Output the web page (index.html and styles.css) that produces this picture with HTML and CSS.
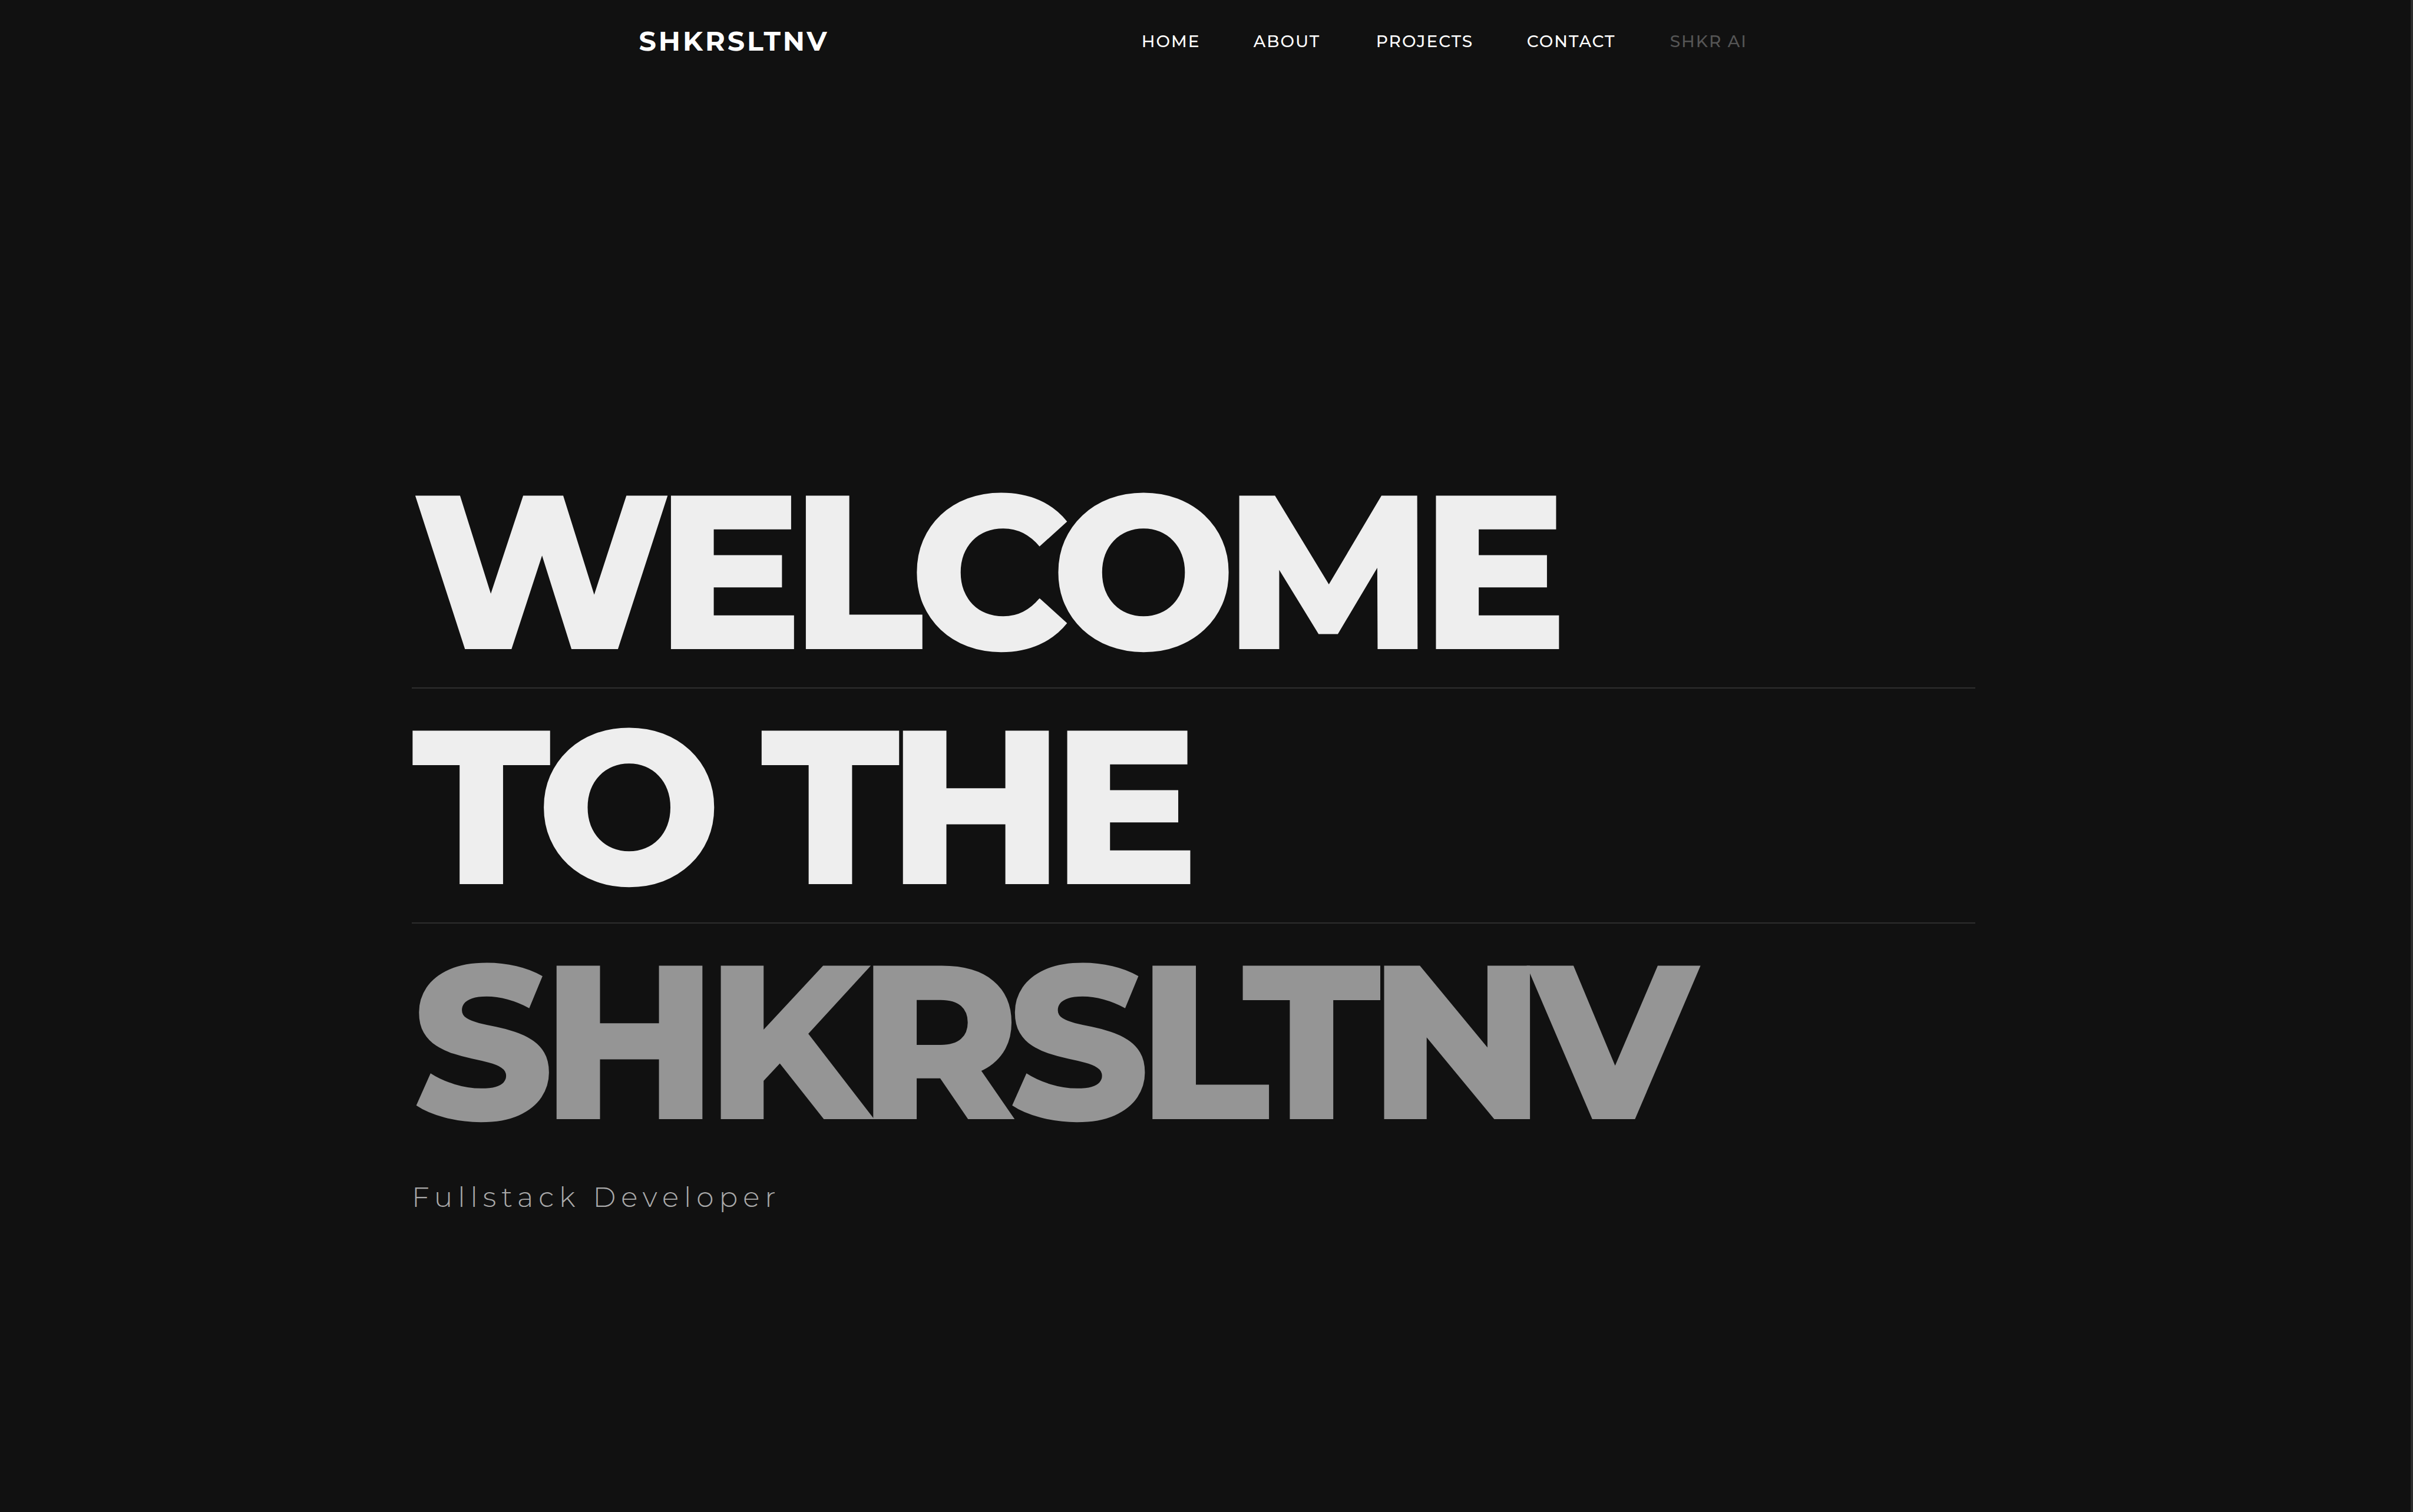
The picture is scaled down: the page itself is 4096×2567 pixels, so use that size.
FILE: index.html
```html
<!DOCTYPE html>
<html lang="en">
<head>
  <meta charset="utf-8">
  <meta name="viewport" content="width=device-width, initial-scale=1">
  <title>SHKRSLTNV</title>
  <link rel="stylesheet" href="styles.css">
</head>
<body>
  <header class="header">
    <a class="logo" href="#">SHKRSLTNV</a>
    <nav class="nav">
      <a class="nav-link" href="#home">HOME</a>
      <a class="nav-link" href="#about">ABOUT</a>
      <a class="nav-link" href="#projects">PROJECTS</a>
      <a class="nav-link" href="#contact">CONTACT</a>
      <a class="nav-link nav-link-muted" href="#ai">SHKR AI</a>
    </nav>
  </header>
  <main class="hero" id="home">
    <h1 class="title">
      <span class="title-row">WELCOME</span>
      <span class="title-row">TO THE</span>
      <span class="title-row title-row-muted">SHKRSLTNV</span>
    </h1>
    <p class="subtitle">Fullstack Developer</p>
  </main>
</body>
</html>
```

FILE: styles.css
```css
* {
  box-sizing: border-box;
}

body {
  margin: 0;
  min-height: 100vh;
  border-right: 4px solid #2c2c2c;
  background: #111;
  color: #fff;
  font-family: Montserrat, Inter, "Liberation Sans", sans-serif;
}

a {
  color: inherit;
  text-decoration: none;
}

.header {
  display: flex;
  align-items: center;
  justify-content: space-between;
  width: 46%;
  height: 140px;
  margin-left: 26.5%;
}

.logo {
  font-size: 46px;
  line-height: 60px;
  font-weight: 700;
  letter-spacing: 4px;
}

.nav {
  display: grid;
  grid-template-columns: 190px 208px 256px 243px 132px;
  font-size: 28px;
  line-height: 40px;
  font-weight: 500;
  letter-spacing: 2px;
}

.nav-link-muted {
  color: #555;
}

.hero {
  width: 64.85%;
  margin-left: 17.08%;
  padding-top: 630px;
}

.title {
  margin: 0;
  color: #eee;
  font-size: 372px;
  line-height: 383px;
  font-weight: 800;
  letter-spacing: -21px;
}

.title-row {
  display: block;
  padding: 7px 0;
  border-bottom: 2px solid #2e2e2e;
  white-space: nowrap;
}

.title-row-muted {
  border-bottom: 0;
  color: #959595;
}

.subtitle {
  margin: 38px 0 0;
  color: #aaa;
  font-size: 47px;
  line-height: 60px;
  font-weight: 300;
  letter-spacing: 9px;
}
```
